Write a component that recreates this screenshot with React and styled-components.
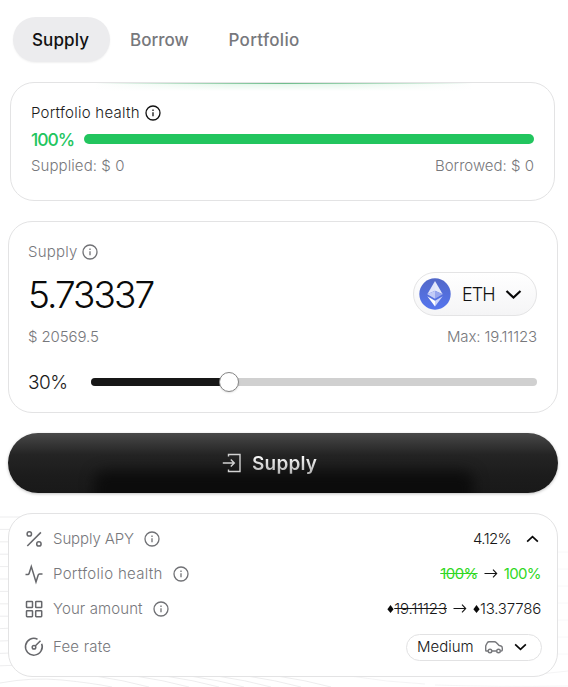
import React from "react";
import styled, { createGlobalStyle } from "styled-components";

const Global = createGlobalStyle`
  * { box-sizing: border-box; }
  body { margin: 0; background: #fff; font-family: Inter, "Liberation Sans", sans-serif; overflow: hidden; }
  button { font: inherit; border: 0; background: none; padding: 0; color: inherit; }
`;

const Page = styled.main`
  position: relative;
  width: 568px;
  height: 687px;
  padding: 17px 10px 0 8px;
  display: flex;
  flex-direction: column;
  overflow: hidden;
`;

const Waves = styled.svg`
  position: absolute;
  left: 0;
  top: 507px;
  z-index: 0;
`;

const Text = styled.span`
  font-size: ${(p) => p.$size || 15}px;
  font-weight: ${(p) => p.$weight || 300};
  letter-spacing: ${(p) => p.$spacing || 0}px;
  color: ${(p) => p.$color || "#77787c"};
  text-decoration: ${(p) => (p.$struck ? "line-through" : "none")};
  line-height: 20px;
  padding-top: ${(p) => p.$drop || 0}px;
  white-space: nowrap;
`;

const Tabs = styled.nav`
  display: flex;
  height: 45px;
  margin-left: 5px;
`;

const Tab = styled.button`
  display: flex;
  align-items: center;
  height: 45px;
  padding: 1px 0 0 ${(p) => p.$inset}px;
  width: ${(p) => p.$width}px;
  border-radius: 23px;
  background: ${(p) => (p.$active ? "#ececee" : "transparent")};
  box-shadow: ${(p) => (p.$active ? "0 1px 2px rgba(0,0,0,.06)" : "none")};
`;

const Card = styled.section`
  position: relative;
  background: #fff;
  border: 1px solid #e3e3e4;
  border-radius: 24px;
`;

const HealthCard = styled(Card)`
  height: 119px;
  margin: 20px 3px 0 2px;
  padding: 20px 20px 0;
  display: flex;
  flex-direction: column;
`;

const Glow = styled.div`
  position: absolute;
  left: 84px;
  top: 0;
  width: 378px;
  height: 8px;
  background:
    linear-gradient(90deg, transparent, #6fbd8c 50%, transparent) top / 100% 1px no-repeat,
    linear-gradient(rgba(255, 255, 255, 0), #fff),
    linear-gradient(90deg, #fff, #e2f6e9 35%, #e2f6e9 65%, #fff);
`;

const Line = styled.div`
  display: flex;
  align-items: center;
  justify-content: ${(p) => (p.$spread ? "space-between" : "flex-start")};
  gap: ${(p) => p.$gap || 0}px;
  height: ${(p) => p.$height || 20}px;
  margin-top: ${(p) => p.$top || 0}px;
`;

const PercentCell = styled.div`
  width: ${(p) => p.$width}px;
  display: flex;
`;

const HealthBar = styled.div`
  flex: 1;
  height: 10px;
  margin-top: -2px;
  border-radius: 5px;
  background: #22c55e;
`;

const SupplyCard = styled(Card)`
  height: 192px;
  margin-top: 20px;
  padding: 20px 20px 0 19px;
  display: flex;
  flex-direction: column;
`;

const TokenPicker = styled.button`
  display: flex;
  align-items: center;
  width: 124px;
  height: 44px;
  padding-left: 5px;
  border: 1px solid #e4e4e5;
  border-radius: 22px;
  background: linear-gradient(#fff, #f5f5f6);
`;

const TokenName = styled.span`
  width: 43px;
  margin-left: 11px;
  display: flex;
`;

const Track = styled.div`
  flex: 1;
  height: 8px;
  border-radius: 4px;
  background: #d0d0d0;
`;

const Filled = styled.div`
  position: relative;
  height: 8px;
  border-radius: 4px;
  background: #171717;
`;

const Thumb = styled.div`
  position: absolute;
  right: -14px;
  top: -6px;
  width: 20px;
  height: 20px;
  border: 1px solid #858585;
  border-radius: 50%;
  background: #fff;
  box-shadow: 0 1px 2px rgba(0, 0, 0, .12);
`;

const SubmitButton = styled.button`
  position: relative;
  flex: none;
  height: 60px;
  margin-top: 20px;
  border-radius: 30px;
  overflow: hidden;
  display: flex;
  align-items: center;
  padding-left: 214px;
  gap: 10px;
  background: linear-gradient(#4a4a4a 0, #3a3a3a 14%, #242424 36%, #1c1c1c 70%, #191919);
  box-shadow: 0 1px 3px rgba(0, 0, 0, .25);
`;

const Shade = styled.div`
  position: absolute;
  left: 86px;
  top: 38px;
  width: 380px;
  height: 40px;
  border-radius: 12px;
  background: #0c0c0c;
  filter: blur(7px);
`;

const SubmitLabel = styled.span`
  position: relative;
  font-size: 19px;
  font-weight: 600;
  letter-spacing: 0.2px;
  line-height: 26px;
  padding-top: 1px;
  color: transparent;
  background: linear-gradient(#fff 20%, #a4a4a4);
  background-clip: text;
`;

const Layer = styled.span`
  position: relative;
  display: flex;
`;

const DetailsCard = styled(Card)`
  height: 164px;
  margin-top: 20px;
  padding: 7px 16px 0 16px;
`;

const DetailRow = styled.div`
  display: flex;
  align-items: center;
  justify-content: space-between;
  height: ${(p) => p.$height || 35}px;
`;

const Cluster = styled.div`
  display: flex;
  align-items: center;
  gap: ${(p) => p.$gap}px;
`;

const RowIcon = styled.span`
  display: flex;
  width: ${(p) => p.$width || 18}px;
`;

const FeePicker = styled.button`
  display: flex;
  align-items: center;
  justify-content: space-between;
  width: 136px;
  height: 27px;
  margin-right: -1px;
  padding: 0 14px 0 10px;
  border: 1px solid #e2e2e3;
  border-radius: 14px;
  background: #fff;
`;

const Info = ({ color = "#707175" }) => (
  <svg width="16" height="16" viewBox="0 0 16 16" fill="none" stroke={color}>
    <circle cx="8" cy="8" r="7" strokeWidth="1.3" />
    <path d="M8 7.2v4" strokeWidth="1.3" />
    <path d="M8 4.6v1.3" strokeWidth="1.3" />
  </svg>
);

const Chevron = ({ up, width = 17, height = 9 }) => (
  <svg width={width} height={height} viewBox="0 0 17 9" fill="none" stroke="#080808" strokeWidth="2.2">
    <path d={up ? "M1.5 8 8.5 1.5 15.5 8" : "M1.5 1 8.5 7.5 15.5 1"} />
  </svg>
);

const Ether = () => (
  <svg width="32" height="32" viewBox="0 0 32 32">
    <defs>
      <linearGradient id="coin" x1="0" y1="0" x2="0" y2="1">
        <stop stopColor="#5268c8" />
        <stop offset="1" stopColor="#5575ee" />
      </linearGradient>
    </defs>
    <circle cx="16" cy="16" r="15.7" fill="url(#coin)" />
    <path d="M16 3 8.3 16.3l7.700-3.500Z" fill="#dfe4fb" />
    <path d="M16 3v9.800l7.700 3.500Z" fill="#fff" fillOpacity=".85" />
    <path d="m8.300 16.300 7.700 4.500v-8Z" fill="#c3ccf7" />
    <path d="m23.700 16.300-7.700 4.500v-8Z" fill="#98a7ee" />
    <path d="m8.300 18.300 7.700 4.400V28.500Z" fill="#fff" />
    <path d="m23.700 18.300-7.700 4.400V28.500Z" fill="#cbd4fb" />
  </svg>
);

const Enter = () => (
  <svg width="20" height="20" viewBox="0 0 20 20" fill="none" stroke="#d2d2d2" strokeWidth="1.4">
    <path d="M6.500 3.500V1.500h11.500v17H6.500v-2" />
    <path d="M.8 10h11.700M8.800 6.500 12.300 10l-3.500 3.500" />
  </svg>
);

const Arrow = () => (
  <svg width="14" height="12" viewBox="0 0 14 12" fill="none" stroke="#151515" strokeWidth="1.1">
    <path d="M.5 5.500h12M9 1.700 12.700 5.500 9 9.300" />
  </svg>
);

const Diamond = () => (
  <svg width="7" height="8" viewBox="0 0 7 8">
    <path d="M3.500 0 6.600 4.200 3.500 8 .4 4.200Z" fill="#0a0a0a" />
  </svg>
);

const drawings = {
  percent: (
    <>
      <path d="M2.300 16 15.900 2.400" />
      <circle cx="4.300" cy="3.900" r="2.200" />
      <circle cx="13.900" cy="13.900" r="2.200" />
    </>
  ),
  pulse: <path d="M.5 9.500h2.300q1 0 1.300-1L6.300 1.500l4.700 15.500 2.200-7q.3-1 1.300-1h3" />,
  grid: (
    <>
      <rect x="1.500" y="1.500" width="6" height="6" rx=".6" />
      <rect x="10.700" y="1.500" width="6" height="6" rx=".6" />
      <rect x="1.500" y="10.700" width="6" height="6" rx=".6" />
      <rect x="10.700" y="10.700" width="6" height="6" rx=".6" />
    </>
  ),
  gauge: (
    <>
      <path d="M12.500 1.200A8.400 8.400 0 1 0 16.700 5.800M10.200 8 15.500 2.700" />
      <circle cx="9" cy="9.300" r="1.800" />
    </>
  ),
};

const Glyph = ({ name }) => (
  <svg width="18" height="18" viewBox="0 0 18 18" fill="none" stroke="#66676b" strokeWidth="1.5" overflow="visible">
    {drawings[name]}
  </svg>
);

const Car = () => (
  <svg width="18" height="13" viewBox="0 0 18 13" fill="none" stroke="#77787c" strokeWidth="1.4">
    <path d="M3 10H1.200Q.7 10 .7 9.200V5.500Q.7 4.700 1.300 3.700L2.500 1.500Q3 .8 4 .8h5.500q1 0 1.700.7L14 4.300l2 .7q1.300.5 1.300 2v2q0 1-1 1h-.5M6.800 10h4.700" />
    <circle cx="5" cy="10" r="1.800" />
    <circle cx="13.500" cy="10" r="1.800" />
  </svg>
);

const leftWaves = Array.from({ length: 13 }, (_, i) => 10 + i * 12.4);
const lowerWaves = [95, 135, 165, 190, 217, 247, 277];

export default function App() {
  return (
    <>
      <Global />
      <Page>
        <Waves width="568" height="180" fill="none" stroke="#e9e9ea" strokeWidth=".8">
          {leftWaves.map((y, i) => (
            <path key={y} d={`M0 ${y}q12 ${i > 8 ? -1 : 0} 30 0`} />
          ))}
          {lowerWaves.map((x) => (
            <path key={x} d={`M${x} 169q28 4 54 11`} />
          ))}
          <path d="M0 176Q32 170 62 173T112 180" />
          <path stroke="#f1f1f2" d="M350 169q36 6 75 8M435 178q60 2 133 1M540 167l28-3" />
          <path stroke="#f6f6f7" d="M558 45h10M558 62h10M558 79h10M558 96h10M558 113h10M558 130h10M558 147h10" />
        </Waves>
        <Tabs>
          <Tab $active $width={97} $inset={19}><Text $size={17} $weight={450} $color="#111" $spacing={0.1}>Supply</Text></Tab>
          <Tab $width={98} $inset={20}><Text $size={17} $weight={450} $spacing={0}>Borrow</Text></Tab>
          <Tab $width={120} $inset={20.5}><Text $size={17} $weight={450} $spacing={0.3}>Portfolio</Text></Tab>
        </Tabs>

        <HealthCard>
          <Glow />
          <Line $gap={5}><Text $color="#1b1b1b" $spacing={0.25}>Portfolio health</Text><Info color="#111" /></Line>
          <Line $top={7}>
            <PercentCell $width={53}><Text $size={17.5} $weight={450} $color="#22c55e" $spacing={-1}>100%</Text></PercentCell>
            <HealthBar />
          </Line>
          <Line $spread $top={6}><Text $spacing={0.08}>Supplied: $ 0</Text><Text>Borrowed: $ 0</Text></Line>
        </HealthCard>

        <SupplyCard>
          <Line $gap={5}><Text $spacing={0.2}>Supply</Text><Info /></Line>
          <Line $spread $height={44} $top={10}>
            <Text $size={37} $color="#0a0a0a" $spacing={-1.95} $drop={2}>5.73337</Text>
            <TokenPicker><Ether /><TokenName><Text $size={18} $color="#111" $spacing={-0.9} $drop={2}>ETH</Text></TokenName><Chevron /></TokenPicker>
          </Line>
          <Line $spread $top={11}><Text $spacing={-0.1}>$ 20569.5</Text><Text $spacing={-0.12}>Max: 19.11123</Text></Line>
          <Line $top={25}>
            <PercentCell $width={63}><Text $size={19} $color="#1a1a1a" $spacing={-0.5} $drop={2}>30%</Text></PercentCell>
            <Track><Filled style={{ width: "30%" }}><Thumb /></Filled></Track>
          </Line>
        </SupplyCard>

        <SubmitButton><Shade /><Layer><Enter /></Layer><SubmitLabel>Supply</SubmitLabel></SubmitButton>

        <DetailsCard>
          <DetailRow>
            <Cluster $gap={10}><RowIcon><Glyph name="percent" /></RowIcon><Text $spacing={-0.1}>Supply APY</Text><Info /></Cluster>
            <Cluster $gap={15}><Text $color="#171717" $spacing={-0.6}>4.12%</Text><RowIcon $width={15}><Chevron up width={13} height={8} /></RowIcon></Cluster>
          </DetailRow>
          <DetailRow>
            <Cluster $gap={10}><RowIcon><Glyph name="pulse" /></RowIcon><Text $spacing={0.31}>Portfolio health</Text><Info /></Cluster>
            <Cluster $gap={6}><Text $struck $color="#30d824" $spacing={-0.6} $weight={400}>100%</Text><Arrow /><Text $color="#30d824" $spacing={-0.6} $weight={400}>100%</Text></Cluster>
          </DetailRow>
          <DetailRow>
            <Cluster $gap={10}><RowIcon><Glyph name="grid" /></RowIcon><Text $spacing={0.1}>Your amount</Text><Info /></Cluster>
            <Cluster $gap={6}>
              <Cluster $gap={0}><Diamond /><Text $struck $color="#171717" $spacing={-0.1}>19.11123</Text></Cluster>
              <Arrow />
              <Cluster $gap={0}><Diamond /><Text $color="#171717" $spacing={-0.2}>13.37786</Text></Cluster>
            </Cluster>
          </DetailRow>
          <DetailRow $height={42}>
            <Cluster $gap={10}><RowIcon><Glyph name="gauge" /></RowIcon><Text $spacing={0.2}>Fee rate</Text></Cluster>
            <FeePicker><Text $color="#171717">Medium</Text><Car /><Chevron width={13} height={8} /></FeePicker>
          </DetailRow>
        </DetailsCard>
      </Page>
    </>
  );
}
